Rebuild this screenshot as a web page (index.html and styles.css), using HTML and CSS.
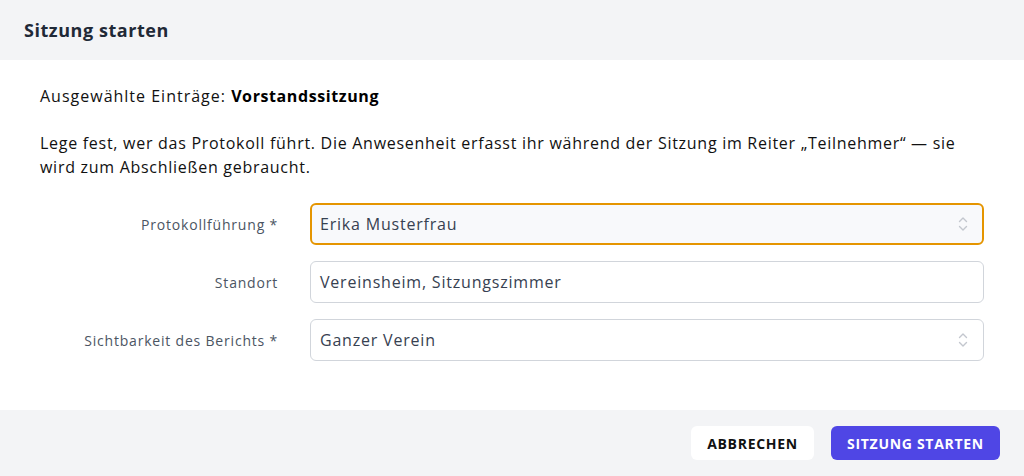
FILE: index.html
```html
<!DOCTYPE html>
<html lang="de">
<head>
<meta charset="utf-8">
<title>Sitzung starten</title>
<link rel="stylesheet" href="styles.css">
</head>
<body>
<div class="dialog">
  <header class="dialog-header">
    <h1 class="dialog-title">Sitzung starten</h1>
  </header>
  <main class="dialog-body">
    <p class="selected">Ausgewählte Einträge: <strong>Vorstandssitzung</strong></p>
    <p class="intro">Lege fest, wer das Protokoll führt. Die Anwesenheit erfasst ihr während der Sitzung im Reiter „Teilnehmer“ — sie wird zum Abschließen gebraucht.</p>
    <div class="form">
      <label class="label">Protokollführung *</label>
      <div class="field field-focus">
        <span class="value">Erika Musterfrau</span>
        <svg class="chev" width="12" height="18" viewBox="0 0 12 18" fill="none" stroke="currentColor" stroke-width="1.4" stroke-linecap="round" stroke-linejoin="round"><path d="M2.5 6.5L6 3l3.5 3.5"/><path d="M2.5 11.5L6 15l3.5-3.5"/></svg>
      </div>
      <label class="label">Standort</label>
      <div class="field">
        <span class="value">Vereinsheim, Sitzungszimmer</span>
      </div>
      <label class="label">Sichtbarkeit des Berichts *</label>
      <div class="field">
        <span class="value">Ganzer Verein</span>
        <svg class="chev" width="12" height="18" viewBox="0 0 12 18" fill="none" stroke="currentColor" stroke-width="1.4" stroke-linecap="round" stroke-linejoin="round"><path d="M2.5 6.5L6 3l3.5 3.5"/><path d="M2.5 11.5L6 15l3.5-3.5"/></svg>
      </div>
    </div>
  </main>
  <footer class="dialog-footer">
    <button class="btn btn-secondary">Abbrechen</button>
    <button class="btn btn-primary">Sitzung starten</button>
  </footer>
</div>
</body>
</html>
```

FILE: styles.css
```css
* { box-sizing: border-box; }
html, body { margin: 0; padding: 0; }
body {
  width: 1024px;
  height: 476px;
  background: #ffffff;
  font-family: "Open Sans", "Liberation Sans", sans-serif;
  color: #111111;
  overflow: hidden;
}
.dialog {
  display: flex;
  flex-direction: column;
  height: 476px;
}
.dialog-header {
  height: 60px;
  background: #f3f4f6;
  display: flex;
  align-items: center;
  padding: 0 24px;
}
.dialog-title {
  margin: 0;
  font-size: 18px;
  font-weight: 700;
  letter-spacing: 0.55px;
  color: #1f2937;
}
.dialog-body {
  flex: 1;
  padding: 24px 40px 0 40px;
}
.selected {
  margin: 0;
  font-size: 16px;
  line-height: 24px;
  letter-spacing: 1px;
}
.selected strong { font-weight: 700; color: #000; letter-spacing: 0.6px; }
.intro {
  margin: 23px 0 0 0;
  font-size: 16px;
  line-height: 24px;
  letter-spacing: 0.72px;
  color: #111111;
}
.form {
  margin-top: 24px;
  display: grid;
  grid-template-columns: 238px 1fr;
  column-gap: 32px;
  row-gap: 16px;
  align-items: center;
}
.label {
  text-align: right;
  font-size: 14px;
  letter-spacing: 0.8px;
  color: #4b5563;
}
.field {
  height: 42px;
  border: 1px solid #d1d5db;
  border-radius: 6px;
  background: #fff;
  display: flex;
  align-items: center;
  justify-content: space-between;
  padding: 0 14px 0 9px;
  font-size: 16px;
  letter-spacing: 0.8px;
  color: #374151;
}
.field-focus {
  border: 2px solid #e59500;
  background: #f8f9fb;
  padding-left: 8px;
  padding-right: 13px;
}
.chev { color: #c3c7ce; }
.dialog-footer {
  height: 66px;
  background: #f3f4f6;
  display: flex;
  justify-content: flex-end;
  align-items: center;
  gap: 17px;
  padding: 0 24px;
}
.btn {
  height: 34px;
  border: none;
  border-radius: 6px;
  font-family: inherit;
  font-size: 14px;
  font-weight: 700;
  letter-spacing: 0.7px;
  text-transform: uppercase;
  white-space: nowrap;
  padding: 0;
  text-align: center;
}
.btn-secondary { background: #fff; color: #111; width: 123px; }
.btn-primary { background: #4f46e5; color: #fff; width: 169px; }
```
